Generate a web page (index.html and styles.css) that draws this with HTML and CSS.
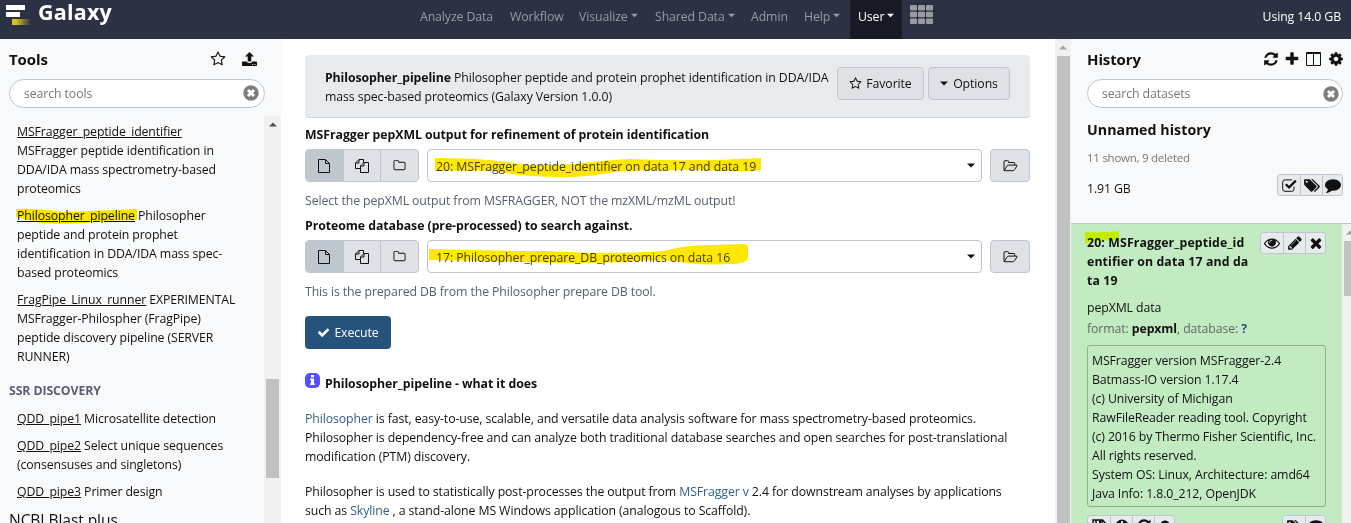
FILE: index.html
```html
<!DOCTYPE html>
<html lang="en">
<head>
<meta charset="utf-8">
<title>Galaxy</title>
<link rel="stylesheet" href="styles.css">
</head>
<body>
<svg class="defs" aria-hidden="true">
  <symbol id="check" viewBox="0 0 1792 1792"><path d="M1671 566q0 40-28 68l-724 724-136 136q-28 28-68 28t-68-28l-136-136-362-362q-28-28-28-68t28-68l136-136q28-28 68-28t68 28l294 295 656-657q28-28 68-28t68 28l136 136q28 28 28 68z"/></symbol>
  <symbol id="plus" viewBox="0 0 1792 1792"><path d="M1600 736v192q0 40-28 68t-68 28h-416v416q0 40-28 68t-68 28h-192q-40 0-68-28t-28-68v-416h-416q-40 0-68-28t-28-68v-192q0-40 28-68t68-28h416v-416q0-40 28-68t68-28h192q40 0 68 28t28 68v416h416q40 0 68 28t28 68z"/></symbol>
  <symbol id="times" viewBox="0 0 1792 1792"><path d="M1490 1322q0 40-28 68l-136 136q-28 28-68 28t-68-28l-294-294-294 294q-28 28-68 28t-68-28l-136-136q-28-28-28-68t28-68l294-294-294-294q-28-28-28-68t28-68l136-136q28-28 68-28t68 28l294 294 294-294q28-28 68-28t68 28l136 136q28 28 28 68t-28 68l-294 294 294 294q28 28 28 68z"/></symbol>
  <symbol id="cog" viewBox="0 0 1792 1792"><path d="M1152 896q0-106-75-181t-181-75-181 75-75 181 75 181 181 75 181-75 75-181zm512-109v222q0 12-8 23t-20 13l-185 28q-19 54-39 91 35 50 107 138 10 12 10 25t-9 23q-27 37-99 108t-94 71q-12 0-26-9l-138-108q-44 23-91 38-16 136-29 186-7 28-36 28h-222q-14 0-24.500-8.500t-11.500-21.500l-28-184q-49-16-90-37l-141 107q-10 9-25 9-14 0-25-11-126-114-165-168-7-10-7-23 0-12 8-23 15-21 51-66.500t54-70.500q-27-50-41-99l-183-27q-13-2-21-12.500t-8-23.500v-222q0-12 8-23t19-13l186-28q14-46 39-92-40-57-107-138-10-12-10-24 0-10 9-23 26-36 98.500-107.500t94.500-71.500q13 0 26 10l138 107q44-23 91-38 16-136 29-186 7-28 36-28h222q14 0 24.500 8.500t11.500 21.500l28 184q49 16 90 37l142-107q9-9 24-9 13 0 25 10 129 119 165 170 7 8 7 22 0 12-8 23-15 21-51 66.500t-54 70.500q26 50 41 98l183 28q13 2 21 12.500t8 23.500z"/></symbol>
  <symbol id="refresh" viewBox="0 0 1792 1792"><path d="M1639 1056q0 5-1 7-64 268-268 434.500t-478 166.500q-146 0-282.500-55t-243.500-157l-129 129q-19 19-45 19t-45-19-19-45v-448q0-26 19-45t45-19h448q26 0 45 19t19 45-19 45l-137 137q71 66 161 102t187 36q134 0 250-65t186-179q11-17 53-117 8-23 30-23h192q13 0 22.500 9.500t9.500 22.500zm25-800v448q0 26-19 45t-45 19h-448q-26 0-45-19t-19-45 19-45l138-138q-148-137-349-137-134 0-250 65t-186 179q-11 17-53 117-8 23-30 23h-199q-13 0-22.500-9.500t-9.500-22.500v-7q65-268 270-434.500t480-166.500q146 0 284 55.500t245 156.500l130-129q19-19 45-19t45 19 19 45z"/></symbol>
  <symbol id="comment" viewBox="0 0 1792 1792"><path d="M1792 896q0 174-120 321.500t-326 233-450 85.500q-70 0-145-8-198 175-460 242-49 14-114 22-17 2-30.500-9t-17.500-29q-3-4 0-13t6-18 27-33 60-68 65-100 50-130q-157-89-247.500-220t-90.500-281q0-130 71-248.500t191-204.500 286-136.500 348-50.500q244 0 450 85.500t326 233 120 321.500z"/></symbol>
  <symbol id="file" viewBox="0 0 12 14"><path fill="none" stroke="currentColor" d="M.5.500H7.500L11.500 4.500V13.500H.5zM7.500.5V4.500H11.500"/></symbol>
  <symbol id="folder" viewBox="0 0 1792 1792"><path d="M1600 1312v-704q0-40-28-68t-68-28h-704q-40 0-68-28t-28-68v-64q0-40-28-68t-68-28h-320q-40 0-68 28t-28 68v960q0 40 28 68t68 28h1216q40 0 68-28t28-68zm128-704v704q0 92-66 158t-158 66h-1216q-92 0-158-66t-66-158v-960q0-92 66-158t158-66h320q92 0 158 66t66 158v32h672q92 0 158 66t66 158z"/></symbol>
  <symbol id="files" viewBox="0 0 14 14"><path fill="none" stroke="currentColor" d="M5.500 9.500h-5v-5.500l3.500-3.500h4.500v3M4 .5v3.500H.5M5.500 13.500v-6.500l3.500-3.500h4.500v10zM9 3.500V7H5.500"/></symbol>
  <symbol id="open" viewBox="0 0 15 12"><path fill="none" stroke="currentColor" stroke-linejoin="round" d="M1 10V1.500Q1 .7 1.800.7h3q.8 0 .8.8V2.500h5.300q.8 0 .8.8V5M1.200 10.500 4 6q.6-.9 1.600-.9h7.700q1.200 0 .6.9l-2.400 3.700q-.7 1-1.700 1H1.800q-.8 0-.8-.8"/></symbol>
  <symbol id="tags" viewBox="0 0 2048 1792"><path d="M576 448q0-53-37.500-90.500t-90.500-37.500-90.500 37.500-37.500 90.500 37.500 90.500 90.500 37.500 90.500-37.500 37.500-90.500zm1067 576q0 53-37 90l-491 492q-39 37-91 37-53 0-90-37l-715-716q-38-37-64.500-101t-26.500-117v-416q0-52 38-90t90-38h416q53 0 117 26.500t102 64.500l715 714q37 39 37 91zm384 0q0 53-37 90l-491 492q-39 37-91 37-36 0-59-14t-53-45l470-470q37-37 37-90 0-52-37-91l-715-714q-38-38-102-64.500t-117-26.500h224q53 0 117 26.500t102 64.500l715 714q37 39 37 91z"/></symbol>
  <symbol id="eye" viewBox="0 0 1792 1792"><path d="M1664 960q-152-236-381-353 61 104 61 225 0 185-131.500 316.500t-316.500 131.500-316.500-131.500-131.500-316.500q0-121 61-225-229 117-381 353 133 205 333.500 326.500t434.500 121.500 434.500-121.500 333.500-326.500zm-720-384q0-20-14-34t-34-14q-125 0-214.500 89.500t-89.500 214.500q0 20 14 34t34 14 34-14 14-34q0-86 61-147t147-61q20 0 34-14t14-34zm848 384q0 34-20 69-140 230-376.500 368.500t-499.500 138.500-499.500-139-376.500-368q-20-35-20-69t20-69q140-229 376.500-368t499.500-139 499.500 139 376.500 368q20 35 20 69z"/></symbol>
  <symbol id="pencil" viewBox="0 0 1792 1792"><path d="M491 1536l91-91-235-235-91 91v107h128v128h107zm523-928q0-22-22-22-10 0-17 7l-542 542q-7 7-7 17 0 22 22 22 10 0 17-7l542-542q7-7 7-17zm-54-192l416 416-832 832h-416v-416zm683 96q0 53-37 90l-166 166-416-416 166-165q36-38 90-38 53 0 91 38l235 234q37 39 37 91z"/></symbol>
  <symbol id="star" viewBox="0 0 1792 1792"><path d="M1201 1004l306-297-422-62-189-382-189 382-422 62 306 297-73 421 378-199 377 199zm527-357q0 22-26 48l-363 354 86 500q1 7 1 20 0 50-41 50-19 0-40-12l-449-236-449 236q-22 12-40 12-21 0-31.500-14.500t-10.500-35.500q0-6 2-20l86-500-364-354q-25-27-25-48 0-37 56-46l502-73 225-455q19-41 49-41t49 41l225 455 502 73q56 9 56 46z"/></symbol>
  <symbol id="upload" viewBox="0 0 15 14"><path d="M7.500 0 12 4.500H9.300V9q0 .6-.6.6H6.300q-.6 0-.6-.6V4.500H3zM0 10.300q0-.8.8-.8h3.900q.5 1.500 2.800 1.500t2.800-1.500h3.900q.8 0 .8.800v2.900q0 .8-.8.800H.8q-.8 0-.8-.8zm10.200 1.700v1h1v-1zm2.300 0v1h1v-1z" fill-rule="evenodd"/></symbol>
  <symbol id="columns" viewBox="0 0 15 14"><path d="M1 0h13q1 0 1 1v12q0 1-1 1H1q-1 0-1-1V1q0-1 1-1zm0 2v11h6V2zm7 0v11h6V2z" fill-rule="evenodd"/></symbol>
  <symbol id="checkbox" viewBox="0 0 15 13"><path fill="none" stroke="currentColor" d="M12 7.500V10q0 2.300-2.300 2.300H3Q.7 12.300.7 10V3.200Q.7.900 3 .9h7"/><path d="M3 6l1.600-1.600L7 6.800 13 .8l1.700 1.700L7 10z"/></symbol>
  <symbol id="clear" viewBox="0 0 16 16"><circle cx="8" cy="8" r="7.700"/><path stroke="#fff" stroke-width="3" d="m5 5 6 6m0-6-6 6"/></symbol>
  <symbol id="info" viewBox="0 0 15 15"><rect width="15" height="15" rx="5"/><path fill="#fff" d="M6 2h3v2.300H6zM5 5.500h4v5h1V12H5v-1.500h1V7H5z"/></symbol>
  <symbol id="caret" viewBox="0 0 8 5"><path d="M0 .5h8L4 4.500z"/></symbol>
  <symbol id="up" viewBox="0 0 8 5"><path d="M0 4.500h8L4 .5z"/></symbol>
  <symbol id="save" viewBox="0 0 14 14"><path fill="none" stroke="currentColor" stroke-width="1.500" d="M1 1h9.500L13 3.500V13H1zM4 1v4h6V1M3.500 13V8.500h7V13"/><path d="M7 1h2v3H7z"/></symbol>
  <symbol id="infoc" viewBox="0 0 14 14"><circle cx="7" cy="7" r="6.500"/><path fill="#e8ebee" d="M6 2h2v2H6zM5 5.500h3V10h1v1.500H5V10h1V7H5z"/></symbol>
  <symbol id="repeat" viewBox="0 0 14 14"><path fill="none" stroke="currentColor" stroke-width="2.200" d="M11.500 3.500a5.500 5.500 0 1 0 1 4.500"/><path d="M13.500.500v5.500H8z"/></symbol>
  <symbol id="help" viewBox="0 0 14 14"><circle cx="7" cy="6" r="4.500"/></symbol>
</svg>

<header class="masthead">
  <div class="brand">
    <svg class="logo" viewBox="0 0 26 22"><defs><linearGradient id="gold"><stop offset=".2" stop-color="#d8c126"/><stop offset="1" stop-color="#d8c126" stop-opacity="0"/></linearGradient></defs><path fill="#fff" d="M0 1h19v5H0zM0 8h14v5H0z"/><path fill="url(#gold)" d="M6 15h19v6H6z"/></svg>
    <span class="brand-name">Galaxy</span>
  </div>
  <nav class="nav">
    <a class="w-analyze">Analyze Data</a><a class="w-workflow">Workflow</a><a class="w-vis">Visualize <svg class="caret"><use href="#caret"/></svg></a><a class="w-shared">Shared Data <svg class="caret"><use href="#caret"/></svg></a><a class="w-admin">Admin</a><a class="w-help">Help <svg class="caret"><use href="#caret"/></svg></a><a class="w-user">User<svg class="caret"><use href="#caret"/></svg></a>
    <svg class="apps" viewBox="0 0 23 19"><g><rect width="7" height="5.500" rx="1"/><rect x="8" width="7" height="5.500" rx="1"/><rect x="16" width="7" height="5.500" rx="1"/><rect y="6.700" width="7" height="5.500" rx="1"/><rect x="8" y="6.700" width="7" height="5.500" rx="1"/><rect x="16" y="6.700" width="7" height="5.500" rx="1"/><rect y="13.400" width="7" height="5.500" rx="1"/><rect x="8" y="13.400" width="7" height="5.500" rx="1"/><rect x="16" y="13.400" width="7" height="5.500" rx="1"/></g></svg>
  </nav>
  <span class="quota">Using 14.0 GB</span>
</header>

<div class="columns">
  <aside class="tools">
    <div class="panel-head"><h2>Tools</h2><svg class="i-star"><use href="#star"/></svg><svg class="i-upload"><use href="#upload"/></svg></div>
    <div class="search"><span>search tools</span><svg class="clear"><use href="#clear"/></svg></div>
    <div class="tool-area">
      <div class="tool-list">
        <p><a>MSFragger_peptide_identifier</a><br>MSFragger peptide identification in<br>DDA/IDA mass spectrometry-based<br>proteomics</p>
        <p class="marked"><a>Philosopher_pipeline</a> Philosopher<br>peptide and protein prophet<br>identification in DDA/IDA mass spec-<br>based proteomics
          <svg class="mark mark-tool" viewBox="0 0 122 17"><path d="M0 1Q20 0 45 4Q80 3 121 1V12Q90 12 70 15Q40 17 20 14L0 9z"/></svg></p>
        <p><a>FragPipe_Linux_runner</a> EXPERIMENTAL<br>MSFragger-Philospher (FragPipe)<br>peptide discovery pipeline (SERVER<br>RUNNER)</p>
        <h3>SSR DISCOVERY</h3>
        <p><a>QDD_pipe1</a> Microsatellite detection</p>
        <p><a>QDD_pipe2</a> Select unique sequences<br>(consensuses and singletons)</p>
        <p><a>QDD_pipe3</a> Primer design</p>
        <h4>NCBI Blast plus</h4>
      </div>
      <div class="bar bar-tools"><svg class="up"><use href="#up"/></svg><i></i></div>
    </div>
  </aside>

  <main class="center">
    <div class="form">
      <div class="card">
        <div class="card-text"><b>Philosopher_pipeline</b> Philosopher peptide and protein prophet identification in DDA/IDA<br>mass spec-based proteomics (Galaxy Version 1.0.0)</div>
        <div class="btn btn-fav"><svg class="i13"><use href="#star"/></svg>Favorite</div>
        <div class="btn btn-opt"><svg class="caret"><use href="#caret"/></svg>Options</div>
      </div>
      <div class="label label-1">MSFragger pepXML output for refinement of protein identification</div>
      <div class="row">
        <div class="group"><span class="on"><svg class="i-file"><use href="#file"/></svg></span><span><svg class="i-files"><use href="#files"/></svg></span><span><svg class="i-folder"><use href="#folder"/></svg></span></div>
        <div class="select">20: MSFragger_peptide_identifier on data 17 and data 19<svg class="caret"><use href="#caret"/></svg>
          <svg class="mark mark-one" viewBox="0 0 328 20"><path d="M0 0Q42 0 72 4Q95 9 140 6Q170 2 195 1Q260 4 326 0V12Q310 14 260 12Q200 12 180 14Q150 20 120 19Q80 18 60 13Q30 12 0 13z"/></svg></div>
        <div class="browse"><svg class="i-open"><use href="#open"/></svg></div>
      </div>
      <div class="help">Select the pepXML output from MSFRAGGER, NOT the mzXML/mzML output!</div>
      <div class="label label-2">Proteome database (pre-processed) to search against.</div>
      <div class="row">
        <div class="group"><span class="on"><svg class="i-file"><use href="#file"/></svg></span><span><svg class="i-files"><use href="#files"/></svg></span><span><svg class="i-folder"><use href="#folder"/></svg></span></div>
        <div class="select">17: Philosopher_prepare_DB_proteomics on data 16<svg class="caret"><use href="#caret"/></svg>
          <svg class="mark mark-two" viewBox="0 0 320 22"><path d="M0 5Q60 7 120 7Q180 11 235 7Q255 1 280 1L314 0Q319 0 319 3V14Q317 20 300 20Q270 22 245 17Q210 15 200 18Q130 20 100 18Q40 17 0 16z"/></svg></div>
        <div class="browse"><svg class="i-open"><use href="#open"/></svg></div>
      </div>
      <div class="help">This is the prepared DB from the Philosopher prepare DB tool.</div>
      <div class="execute"><svg class="i13"><use href="#check"/></svg>Execute</div>
      <div class="about"><svg class="i-info"><use href="#info"/></svg>Philosopher_pipeline - what it does</div>
      <p class="doc"><a>Philosopher</a> is fast, easy-to-use, scalable, and versatile data analysis software for mass spectrometry-based proteomics.<br>Philosopher is dependency-free and can analyze both traditional database searches and open searches for post-translational<br>modification (PTM) discovery.</p>
      <p class="doc">Philosopher is used to statistically post-processes the output from <a>MSFragger v</a> 2.4 for downstream analyses by applications<br>such as <a>Skyline</a> , a stand-alone MS Windows application (analogous to Scaffold).</p>
    </div>
    <div class="bar bar-center"><svg class="up"><use href="#up"/></svg><i></i></div>
  </main>

  <aside class="history">
    <div class="panel-head"><h2>History</h2><svg class="h-refresh"><use href="#refresh"/></svg><svg class="h-plus"><use href="#plus"/></svg><svg class="h-columns"><use href="#columns"/></svg><svg class="h-cog"><use href="#cog"/></svg></div>
    <div class="search"><span>search datasets</span><svg class="clear"><use href="#clear"/></svg></div>
    <div class="hist-name">Unnamed history</div>
    <div class="counts">11 shown, 9 deleted</div>
    <div class="size-row"><span>1.91 GB</span><div class="minis"><span><svg class="m-check"><use href="#checkbox"/></svg></span><span><svg class="m-tags"><use href="#tags"/></svg></span><span><svg class="m-icon"><use href="#comment"/></svg></span></div></div>
    <div class="datasets">
      <div class="dataset">
        <div class="ds-head">
          <div class="ds-title">20: MSFragger_peptide_id<br>entifier on data 17 and da<br>ta 19<svg class="mark mark-ds" viewBox="0 0 35 12"><path d="M0 1Q15 2 34 0V9Q15 9 0 12z"/></svg></div>
          <div class="minis"><span><svg class="m-icon"><use href="#eye"/></svg></span><span><svg class="m-icon"><use href="#pencil"/></svg></span><span><svg class="m-icon"><use href="#times"/></svg></span></div>
        </div>
        <div class="ds-kind">pepXML data</div>
        <div class="ds-meta">format: <b>pepxml</b>, database: <b class="q">?</b></div>
        <div class="ds-info">MSFragger version MSFragger-2.4<br>Batmass-IO version 1.17.4<br>(c) University of Michigan<br>RawFileReader reading tool. Copyright<br>(c) 2016 by Thermo Fisher Scientific, Inc.<br>All rights reserved.<br>System OS: Linux, Architecture: amd64<br>Java Info: 1.8.0_212, OpenJDK</div>
        <div class="ds-foot"><div class="minis"><span><svg class="f-icon"><use href="#save"/></svg></span><span><svg class="f-icon"><use href="#infoc"/></svg></span><span><svg class="f-icon"><use href="#repeat"/></svg></span><span><svg class="f-icon"><use href="#help"/></svg></span></div><div class="minis"><span><svg class="m-tags"><use href="#tags"/></svg></span><span><svg class="m-icon"><use href="#comment"/></svg></span></div></div>
      </div>
      <div class="bar bar-history"><svg class="up"><use href="#up"/></svg><i></i></div>
    </div>
  </aside>
</div>
</body>
</html>
```
FILE: styles.css
```css
* { box-sizing: border-box; }
html, body { margin: 0; height: 523px; overflow: hidden; }
body { font-family: "Open Sans", sans-serif; font-size: 12.300px; line-height: 19px; color: #111; background: #fff; white-space: nowrap; letter-spacing: -0.1px; }
h2, h3, h4, p { margin: 0; }
svg { display: block; flex: none; fill: currentColor; }
.defs { position: absolute; width: 0; height: 0; }
.caret { width: 8px; height: 5px; }

.masthead { height: 39px; background: #2c3143; display: flex; position: relative; color: #fff; }
.brand { display: flex; width: 412px; padding-left: 6px; gap: 6px; }
.logo { width: 26px; height: 22px; margin-top: 4px; }
.brand-name { font-size: 21.500px; font-weight: 700; line-height: 24px; letter-spacing: 0.200px; }
.nav { display: flex; color: #989ba4; }
.nav a { display: flex; align-items: center; height: 39px; padding: 0 0 6px 8px; gap: 3px; }
.nav .caret { width: 7px; margin-top: -3px; }
.w-analyze { width: 90px; } .w-workflow { width: 69px; } .w-vis { width: 76px; } .w-shared { width: 96px; }
.w-admin { width: 53px; } .w-help { width: 54px; }
.nav .w-user { width: 52px; background: #171a24; color: #fff; gap: 3px; }
.apps { width: 23px; height: 19px; margin: 5px 0 0 8px; }
.quota { margin: 7px 10px 0 auto; }

.columns { display: flex; height: 484px; }
.tools, .history { background: #f8f9fb; }
.tools { width: 281px; }
.panel-head { display: flex; height: 40px; padding: 0 8px 0 9px; align-items: center; }
.panel-head h2 { font-size: 15px; line-height: 20px; margin-right: auto; }
.i-star { width: 16px; height: 16px; margin-right: 16px; }
.i-upload { width: 15px; height: 14px; margin-right: 16px; }
.search { display: flex; justify-content: space-between; align-items: center; width: 256px; height: 29px; margin-left: 9px; border: 1px solid #bdc6d0; border-radius: 15px; background: #fff; padding: 0 5px 0 14px; color: #777; }
.tools .clear { margin-top: -2px; }
.history .search { padding-right: 3px; }
.clear { width: 16px; height: 16px; color: #7d7d7d; }
.tool-area { display: flex; height: 407px; margin-top: 8px; }
.tool-list { width: 264px; padding: 6px 0 0 17px; overflow: hidden; }
.tool-list p { margin-bottom: 8px; position: relative; }
.tool-list a { text-decoration: underline; }
.tool-list h3 { font-size: 12.300px; line-height: 19px; color: #58606e; margin: 15px 0 9px -8px; }
.tool-list h4 { font-size: 15.600px; font-weight: 400; line-height: 22px; margin: 2px 0 0 -8px; }

.bar { background: #f1f1f1; width: 17px; display: flex; flex-direction: column; align-items: center; flex: none; color: #505050; overflow: hidden; }
.bar i { width: 13px; background: #c1c1c1; flex: none; }
.up { width: 8px; height: 5px; margin-top: 6px; }
.bar-tools i { height: 99px; margin-top: 252px; }
.bar-center { width: 16px; color: #a3a3a3; }
.bar-center i { height: 468px; margin-top: 6px; }

.center { width: 790px; display: flex; justify-content: space-between; padding-left: 24px; }
.form { width: 725px; padding-top: 16px; }
.card { display: flex; height: 63px; background: #e8ebee; border-bottom: 1px solid #cfd3d8; border-radius: 4px; padding: 13px 20px 0; }
.card-text { width: 512px; }
.btn { display: flex; align-items: center; justify-content: center; gap: 4px; height: 33px; margin-top: -1px; background: #dee2e7; border: 1px solid #bdc6d0; border-radius: 4px; }
.btn-fav { width: 87px; } .btn-opt { width: 82px; margin-left: 4px; gap: 5px; }
.i13 { width: 13px; height: 13px; }
.label { font-weight: 700; letter-spacing: -0.050px; }
.label-1 { margin: 7px 0 5px; }
.label-2 { margin: 6px 0 5px; }
.row { display: flex; height: 33px; }
.group { display: flex; width: 114px; margin-right: 8px; border: 1px solid #bdc6d0; border-radius: 4px; overflow: hidden; background: #dee2e7; }
.group span { flex: 1; display: flex; align-items: center; justify-content: center; }
.group span + span { border-left: 1px solid #bdc6d0; }
.group .on { background: #bfc7cf; }
.i-file { width: 12px; height: 14px; } .i-files { width: 14px; height: 14px; } .i-folder { width: 13px; height: 13px; } .i-open { width: 15px; height: 12px; }
.select { position: relative; display: flex; align-items: center; justify-content: space-between; width: 555px; border: 1px solid #bdc6d0; border-radius: 4px; padding: 2px 6px 0 8px; margin-right: 8px; color: #444; letter-spacing: -0.060px; }
.select .caret { color: #111; margin-top: -2px; }
.browse { width: 40px; display: flex; align-items: center; justify-content: center; background: #dee2e7; border: 1px solid #bdc6d0; border-radius: 4px; }
.help { color: #58606e; margin-top: 9px; }
.execute { display: flex; align-items: center; justify-content: center; gap: 4px; width: 86px; height: 33px; margin-top: 15px; background: #25537b; color: #fff; border-radius: 4px; }
.about { display: flex; gap: 5px; font-weight: 700; margin: 25px 0 16px; letter-spacing: -0.050px; }
.i-info { width: 15px; height: 15px; margin-top: -1px; color: #5050ff; }
.doc { margin-bottom: 16px; }
.doc a { color: #2f5f8a; }

.mark { position: absolute; mix-blend-mode: multiply; color: #ffe800; }
.mark-tool { width: 122px; height: 17px; left: -1px; top: 2px; }
.mark-one { width: 328px; height: 20px; left: 7px; top: 8px; }
.mark-two { width: 320px; height: 22px; left: 1px; top: 3px; }
.mark-ds { width: 35px; height: 12px; left: -2px; top: -2px; color: #ffff00; }

.history { width: 280px; padding-left: 7px; }
.history .panel-head { padding: 0 7px 0 9px; }
.h-refresh { width: 16px; height: 16px; } .h-plus { width: 16px; height: 16px; margin-left: 5px; } .h-columns { width: 15px; height: 14px; margin-left: 6px; } .h-cog { width: 16px; height: 16px; margin-left: 7px; }
.hist-name { font-size: 14.200px; font-weight: 700; margin: 12px 0 0 9px; line-height: 20px; letter-spacing: 0.050px; }
.counts { margin: 8px 0 0 9px; color: #777; font-size: 11.500px; letter-spacing: -0.250px; }
.size-row { display: flex; justify-content: space-between; margin: 7px 8px 0 9px; height: 22px; }
.size-row > span { margin-top: 5px; }
.minis { display: flex; height: 22px; border: 1px solid #bdc6d0; border-radius: 3px; background: #e8ebee; overflow: hidden; flex: none; }
.minis span { width: 22px; display: flex; align-items: center; justify-content: center; }
.minis span:last-child { width: 20px; }
.minis span + span { border-left: 1px solid #bdc6d0; }
.m-check { width: 15px; height: 13px; } .m-tags { width: 17px; height: 15px; } .m-icon { width: 16px; height: 16px; } .f-icon { width: 14px; height: 14px; }
.datasets { display: flex; margin: 27px 0 0 -7px; height: 300px; border-top: 1px solid #bdc6d0; }
.dataset { width: 271px; background: #c2ebc2; padding: 9px 16px 0; }
.ds-head { display: flex; justify-content: space-between; height: 57px; }
.ds-head .minis { margin-top: -1px; }
.ds-title { position: relative; font-weight: 700; letter-spacing: 0.130px; }
.ds-kind { margin-top: 8px; }
.ds-meta { margin-top: 2px; color: #5c6a62; }
.ds-meta b { color: #111; } .ds-meta .q { color: #25537b; }
.ds-info { margin-top: 7px; height: 162px; border: 1px solid #8fae8f; border-radius: 3px; padding: 5px 4px; }
.ds-foot { display: flex; justify-content: space-between; margin-top: 8px; }
.bar-history { width: 9px; align-items: flex-start; color: #a3a3a3; }
.bar-history .up { margin-left: 4px; }
.bar-history i { width: 7px; height: 55px; margin: 6px 0 0 2px; }
```
